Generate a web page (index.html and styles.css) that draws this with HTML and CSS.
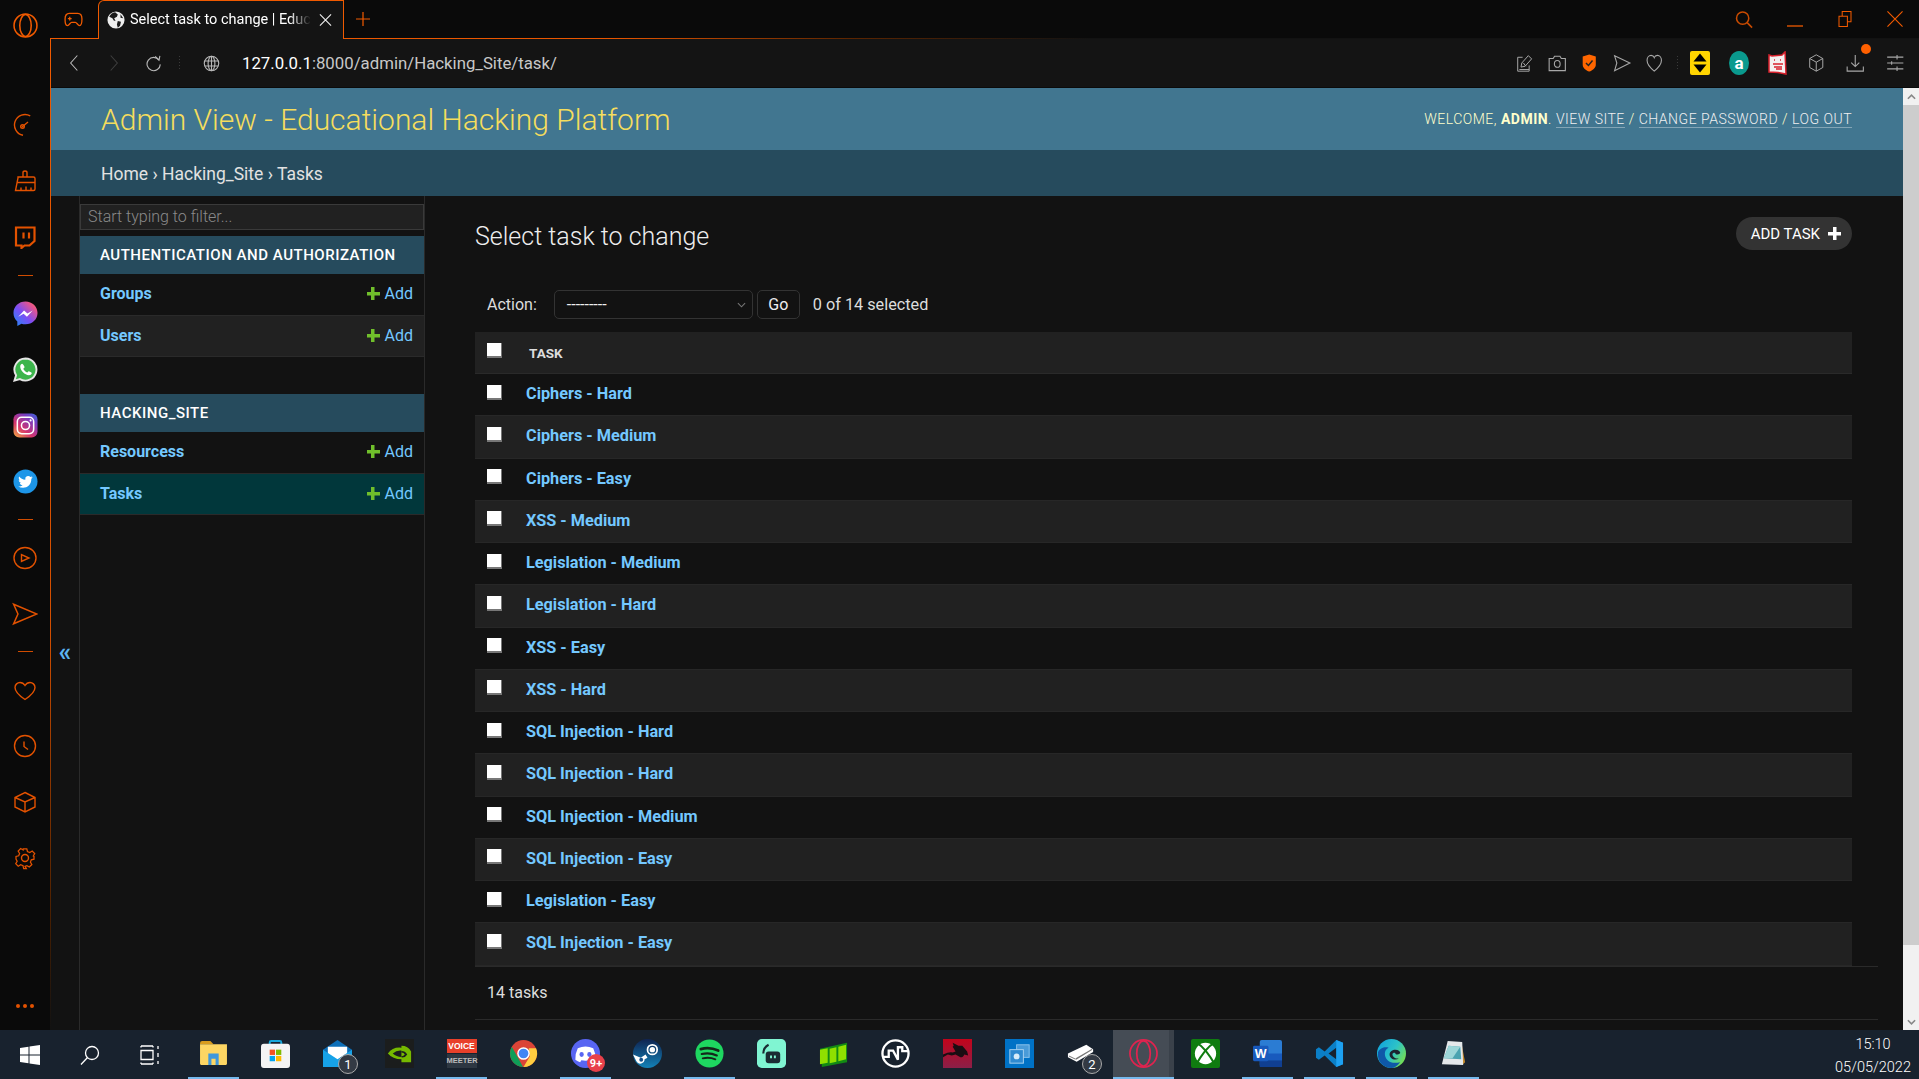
FILE: index.html
```html
<!DOCTYPE html>
<html lang="en">
    <head>
        <meta charset="UTF-8">
        <title>Select task to change | Educational Hacking Platform</title>
        <link rel="stylesheet" href="styles.css">
    </head>
    <body>
        <div class="upper">
            <aside class="rail">
                <svg class="rail-logo" viewBox="0 0 24 24"><circle cx="12" cy="12" r="11"/><ellipse cx="12" cy="12" rx="5.5" ry="10.5"/></svg>
                <ul class="rail-list">
                    <li><svg viewBox="0 0 24 24"><path d="M17.250 2.900A10.500 10.500 0 1 0 10 22.300"/><path d="M9 14l6-5"/><circle cx="9.500" cy="13.500" r="1.800"/><path d="M20 6.500v.01M21.700 9.500v.01M22.400 13v.01M21.700 16.500v.01"/></svg></li>
                    <li><svg viewBox="0 0 24 24"><path d="M10 8V3.500q0-1.500 2-1.500t2 1.500V8"/><path d="M5 8h15.500q1.500 0 1.500 1.500V20q0 1.500-1.500 1.500H2.500L5 9z"/><path d="M4 13.500h18M8 21.500v-3M13 21.500v-4M18 21.500v-3"/></svg></li>
                    <li><svg viewBox="0 0 24 24"><path class="thick" d="M3 2.500h18.500v13.500l-5 4.500h-5l-3 2.500v-2.500H3z"/><path class="thick" d="M10.500 7.500v6M16 7.500v6"/></svg></li>
                    <li class="rail-sep"></li>
                    <li><svg class="brand" viewBox="0 0 26 26"><defs><linearGradient id="msg" x1="0" y1="1" x2="1" y2="0"><stop offset="0" stop-color="#1e8cf5"/><stop offset=".45" stop-color="#7b4df5"/><stop offset=".8" stop-color="#e8558c"/><stop offset="1" stop-color="#f6806a"/></linearGradient></defs><path fill="url(#msg)" d="M13 .5C6 .5.500 5.500.500 12.500c0 3.600 1.500 6.700 4 8.800V26l4.300-2.400c1.300.4 2.700.6 4.200.6 7 0 12.500-5 12.500-11.700S20 .5 13 .5z"/><path fill="#fff" d="M5.500 16.500l6-6.500 3.500 3 5.500-3-6 6.500-3.500-3.200z"/></svg></li>
                    <li><svg class="brand" viewBox="0 0 26 26"><path fill="#3cb54c" stroke="#e6e6e6" stroke-width="2" d="M13 1.500a11.500 11.500 0 0 0-9.800 17.500L1.500 24.500l5.700-1.500A11.500 11.500 0 1 0 13 1.500z"/><path fill="#fff" d="M9.500 7c-.8 0-2 1-2 3 0 4 4.800 9 9 9 2 0 3-1.500 3-2.300 0-.7-2.500-2-3.200-2-.6 0-1 1.300-1.500 1.300-1.200 0-4-2.700-4-3.800 0-.6 1.200-1 1.200-1.600C12 9.800 10.500 7 9.500 7z"/></svg></li>
                    <li><svg class="brand" viewBox="0 0 26 26"><defs><linearGradient id="ig" x1="0" y1="1" x2=".8" y2="0"><stop offset="0" stop-color="#f5b342"/><stop offset=".4" stop-color="#d6336c"/><stop offset=".8" stop-color="#7a3cc0"/><stop offset="1" stop-color="#4f5bd5"/></linearGradient></defs><rect x=".5" y=".5" width="25" height="25" rx="6" fill="url(#ig)"/><rect x="4.500" y="4.500" width="17" height="17" rx="4.500" fill="none" stroke="#fff" stroke-width="1.600"/><circle cx="13" cy="13" r="4.200" fill="none" stroke="#fff" stroke-width="1.600"/><circle cx="18.300" cy="7.700" r="1.100" fill="#fff"/></svg></li>
                    <li><svg class="brand" viewBox="0 0 26 26"><circle cx="13" cy="13" r="12.500" fill="#1d96e8"/><path fill="#fff" d="M20.500 8.700c-.6.300-1.200.4-1.800.5.600-.4 1.100-1 1.400-1.700-.6.400-1.300.6-2 .8a3.100 3.100 0 0 0-5.300 2.800c-2.600-.1-4.900-1.400-6.400-3.300-.8 1.400-.4 3.200 1 4.100-.5 0-1-.1-1.400-.4 0 1.500 1.100 2.800 2.500 3.100-.5.100-.9.100-1.400.1.400 1.200 1.500 2.100 2.900 2.100-1.300 1-3 1.500-4.600 1.300 5.700 3.500 13.700.6 13.700-7.900.7-.5 1.100-1 1.400-1.500z"/></svg></li>
                    <li class="rail-sep"></li>
                    <li><svg viewBox="0 0 24 24"><ellipse cx="12" cy="12" rx="11" ry="10.500"/><path d="M8.500 8.500v7l7.500-3.500z"/></svg></li>
                    <li><svg class="wide" viewBox="0 0 24 24"><path d="M1.500 3L23 12 1.500 21 5.500 12z"/></svg></li>
                    <li class="rail-sep"></li>
                    <li><svg viewBox="0 0 24 24"><path d="M12 21.500C6 17.500 2 14 2 9.500 2 6.500 4.500 4.500 7 4.500c2.200 0 3.900 1.200 5 3 1.100-1.800 2.800-3 5-3 2.500 0 5 2 5 5 0 4.500-4 8-10 12z"/></svg></li>
                    <li><svg viewBox="0 0 24 24"><circle cx="12" cy="12" r="10.500"/><path d="M11 7.500v5l4 3"/></svg></li>
                    <li><svg viewBox="0 0 24 24"><path d="M12 2.500l10 5v9.500l-10 5-10-5V7.500zM2 7.500l10 4.500 10-4.500M12 12v9.500"/></svg></li>
                    <li><svg viewBox="0 0 24 24"><circle cx="12" cy="12" r="3.500"/><path d="M10 2h4l.7 3 2.600 1.100 2.700-1.600 2.800 2.800-1.600 2.700L22 10.500v3l-3 .7-1 2.600 1.600 2.700-2.800 2.800-2.700-1.600-2.100.8L13.500 24h-3l-.7-3.200-2.600-1.100-2.700 1.600-2.800-2.800 1.600-2.700L2 13.500v-3l3-.7 1-2.600-1.600-2.700 2.800-2.800 2.700 1.600L10 2z" transform="translate(1.200 1) scale(.9)"/></svg></li>
                </ul>
                <div class="rail-dots"><span></span><span></span><span></span></div>
            </aside>
            <div class="browser">
                <div class="tabstrip">
                    <svg class="strip-icon pad" viewBox="0 0 20 16"><path d="M5.500 1.500h9c2.500 0 4.500 2 4.500 6 0 4-.5 7-2.500 7s-3-3.500-4.500-3.500H8c-1.500 0-2.500 3.500-4.500 3.500S1 11.500 1 7.500c0-4 2-6 4.500-6z"/><path d="M6 5v4M4 7h4M13.500 6v.01M15.500 8v.01"/></svg>
                    <div class="tab">
                        <svg class="favicon" viewBox="0 0 20 20"><circle cx="10" cy="10" r="9.500" fill="#eee"/><path fill="#1a1a1a" d="M9 1.500C6 2 3.500 4 2.500 6.500L6 8l1.500 2.500 2 .5L8 8l3-1.500 1-2.500zM12 11l3.500 1-1 4.500-2.500 2-1-3.500zM15 3.500l3 4.500-3-.5z"/></svg>
                        <span class="tab-title">Select task to change | Educational Hacking Platform</span>
                        <svg class="tab-close" viewBox="0 0 14 14"><path d="M1 1l12 12M13 1L1 13"/></svg>
                    </div>
                    <svg class="strip-icon new-tab" viewBox="0 0 16 16"><path d="M8 0v16M0 8h16"/></svg>
                    <div class="win-controls">
                        <svg class="win-search" viewBox="0 0 20 20"><circle cx="8.500" cy="8.500" r="6.800"/><path d="M13.500 13.500l5.500 5.500"/></svg>
                        <svg class="win-min" viewBox="0 0 16 16"><path d="M0 15h16"/></svg>
                        <svg class="win-max" viewBox="0 0 16 20"><path d="M.5 6.500h10.500v13H.5zM4.500 6.500V.5H15.500v13H11"/></svg>
                        <svg class="win-close" viewBox="0 0 18 18"><path d="M.5.5l17 17M17.500.5l-17 17"/></svg>
                    </div>
                </div>
                <div class="window">
                    <div class="toolbar">
                        <svg class="tool nav" viewBox="0 0 12 20"><path d="M10 1L2 10l8 9"/></svg>
                        <svg class="tool nav dim" viewBox="0 0 12 20"><path d="M2 1l8 9-8 9"/></svg>
                        <svg class="tool reload" viewBox="0 0 20 20"><path d="M16.500 6A7.800 7.800 0 1 0 18 11"/><path d="M12 1.500l4.500 4.500 1-5"/></svg>
                        <span class="tool-dots"></span>
                        <svg class="tool globe" viewBox="0 0 20 20"><circle cx="10" cy="10" r="8.500"/><ellipse cx="10" cy="10" rx="4" ry="8.500"/><path d="M2 7h16M2 13h16M10 1.500v17"/></svg>
                        <div class="url"><b>127.0.0.1</b>:8000/admin/Hacking_Site/task/</div>
                        <div class="tool-right">
                            <svg class="ext" viewBox="0 0 20 22"><path d="M8 4H2v17h14v-7"/><path d="M6 16l1-5 8-9 4 4-8 9zM9 11l3 4M4 19h12"/></svg>
                            <svg class="ext" viewBox="0 0 20 20"><path d="M1 5h4.500L7 2.500h6L14.500 5H19v13.500H1z"/><ellipse cx="10" cy="11" rx="3.200" ry="3.800"/></svg>
                            <svg class="ext" viewBox="0 0 20 22"><path fill="#ff6600" stroke="none" d="M10 .5l6 2 2 .5v10c0 4-4 7-8 8.500-4-1.500-8-4.500-8-8.500V3l2-.5z"/><path stroke="#222" stroke-width="1.800" d="M6 11l3 3 5-6"/></svg>
                            <svg class="ext" viewBox="0 0 20 20"><path d="M1.500 2L18.500 10 1.500 18.500 4 10z"/></svg>
                            <svg class="ext" viewBox="0 0 20 20"><path d="M10 19C5 15 2 11 2 7c0-3 2-5.500 4.500-5.500C8 1.500 9.500 2.500 10 4c.5-1.500 2-2.500 3.500-2.500C16 1.500 18 4 18 7c0 4-3 8-8 12z"/></svg>
                            <span class="tool-dots small"></span>
                            <svg class="ext-app yellow" viewBox="0 0 20 24"><rect width="20" height="24" rx="2" fill="#ffd400"/><path d="M10 2.500l6.500 8h-13zM10 21.500l-6.500-8h13z" fill="#000"/></svg>
                            <svg class="ext-app" viewBox="0 0 20 24"><ellipse cx="10" cy="12" rx="10" ry="12" fill="#0a9a8e"/><text x="10" y="18" text-anchor="middle" class="ext-a">a</text></svg>
                            <svg class="ext-app last" viewBox="0 0 20 24"><path fill="#f4f0f0" stroke="#d8202c" stroke-width="1.500" d="M1 4l3 1 10-1 3-3 1 22-8-1.500L1 21z"/><path fill="none" stroke="#d8202c" stroke-width="1.600" d="M6 9h1M12 9h1M5 13h10M6 16h8M8 18h6"/></svg>
                            <svg class="ext" viewBox="0 0 20 22"><path d="M10 1l8 4.500v11L10 21l-8-4.500v-11zM2 5.500L10 10l8-4.500M10 10v11"/></svg>
                            <div class="ext-badge-box">
                                <svg class="ext" viewBox="0 0 20 20"><path d="M10 1v13M5.500 9.500L10 14l4.500-4.500M1 14v5h18v-5"/></svg>
                                <span class="ext-badge"></span>
                            </div>
                            <svg class="ext" viewBox="0 0 20 20"><path d="M1 3.500h18M1 10h18M1 16.500h18M12 1v5M6 8v4M12 14v5"/></svg>
                        </div>
                    </div>
                    <div class="viewport">
                        <div class="page">
                            <div class="site-header">
                                <h1 class="branding">Admin View - Educational Hacking Platform</h1>
                                <div class="user-tools">
                                    Welcome, <strong>admin</strong>.
                                    <a href="#">View site</a> /
                                    <a href="#">Change password</a> /
                                    <a href="#">Log out</a>
                                </div>
                            </div>
                            <div class="breadcrumbs"><a href="#">Home</a> › <a href="#">Hacking_Site</a> › Tasks</div>
                            <div class="main">
                                <div class="collapse-col"><button class="collapse">«</button></div>
                                <nav class="nav-sidebar">
                                    <input class="nav-filter" type="search" placeholder="Start typing to filter...">
                                    <div class="app-group">
                                        <div class="caption">Authentication and Authorization</div>
                                        <div class="model-row"><a href="#">Groups</a><a href="#" class="add-link">Add</a></div>
                                        <div class="model-row alt"><a href="#">Users</a><a href="#" class="add-link">Add</a></div>
                                    </div>
                                    <div class="app-group">
                                        <div class="caption">Hacking_Site</div>
                                        <div class="model-row"><a href="#">Resourcess</a><a href="#" class="add-link">Add</a></div>
                                        <div class="model-row current"><a href="#">Tasks</a><a href="#" class="add-link">Add</a></div>
                                    </div>
                                </nav>
                                <div class="content">
                                    <div class="content-head">
                                        <h2 class="page-title">Select task to change</h2>
                                        <a href="#" class="add-task">Add task <span class="add-plus"></span></a>
                                    </div>
                                    <div class="actions">
                                        <label>Action:</label>
                                        <div class="select">---------<svg viewBox="0 0 10 6"><path d="M1 1l4 4 4-4"/></svg></div>
                                        <button class="go">Go</button>
                                        <span class="counter">0 of 14 selected</span>
                                    </div>
                                    <div class="results">
                                        <div class="result-head"><span class="check"></span><span class="head-label">Task</span></div>
                                        <div class="result-row"><span class="check"></span><a href="#">Ciphers - Hard</a></div>
                                        <div class="result-row"><span class="check"></span><a href="#">Ciphers - Medium</a></div>
                                        <div class="result-row"><span class="check"></span><a href="#">Ciphers - Easy</a></div>
                                        <div class="result-row"><span class="check"></span><a href="#">XSS - Medium</a></div>
                                        <div class="result-row"><span class="check"></span><a href="#">Legislation - Medium</a></div>
                                        <div class="result-row"><span class="check"></span><a href="#">Legislation - Hard</a></div>
                                        <div class="result-row"><span class="check"></span><a href="#">XSS - Easy</a></div>
                                        <div class="result-row"><span class="check"></span><a href="#">XSS - Hard</a></div>
                                        <div class="result-row"><span class="check"></span><a href="#">SQL Injection - Hard</a></div>
                                        <div class="result-row"><span class="check"></span><a href="#">SQL Injection - Hard</a></div>
                                        <div class="result-row"><span class="check"></span><a href="#">SQL Injection - Medium</a></div>
                                        <div class="result-row"><span class="check"></span><a href="#">SQL Injection - Easy</a></div>
                                        <div class="result-row"><span class="check"></span><a href="#">Legislation - Easy</a></div>
                                        <div class="result-row"><span class="check"></span><a href="#">SQL Injection - Easy</a></div>
                                    </div>
                                    <div class="paginator">14 tasks</div>
                                </div>
                            </div>
                        </div>
                        <div class="scrollbar">
                            <div class="scroll-btn"><svg viewBox="0 0 10 6"><path d="M1 5l4-4 4 4"/></svg></div>
                            <div class="scroll-thumb"></div>
                            <div class="scroll-track"></div>
                            <div class="scroll-btn"><svg viewBox="0 0 10 6"><path d="M1 1l4 4 4-4"/></svg></div>
                        </div>
                    </div>
                </div>
            </div>
        </div>
        <footer class="taskbar">
            <div class="task-start">
                <div class="sys-btn"><svg class="win-logo" viewBox="0 0 20 20"><path d="M0 3l8.500-1.200V9.500H0zM9.500 1.600L20 0v9.500H9.500zM0 10.500h8.500v7.700L0 17zM9.500 10.500H20V20L9.500 18.400z"/></svg></div>
                <div class="sys-btn"><svg class="sys-line" viewBox="0 0 20 20"><circle cx="12" cy="8" r="6.500"/><path d="M7.500 12.500L1 19.500"/></svg></div>
                <div class="sys-btn"><svg class="sys-line" viewBox="0 0 20 20"><path d="M1 1h12M1 19h12M1 5.500h12v9H1zM18 1v3M18 8v4M18 16v3M1 1v1.500M13 1v1.500M1 17.500V19M13 17.500V19"/></svg></div>
            </div>
            <div class="task-apps">
                <div class="app open"><svg class="app-icon" viewBox="0 0 28 24"><path fill="#d89c1e" d="M1 2a2 2 0 0 1 2-2h8l3 3h-13z"/><path fill="#fdd663" d="M1 3h26v19a1 1 0 0 1-1 1H2a1 1 0 0 1-1-1z"/><path fill="#3f98dc" d="M9 12h10v11h-3v-6h-4v6H9z"/></svg></div>
                <div class="app"><svg class="app-icon" viewBox="0 0 30 30"><path fill="none" stroke="#18a8dc" stroke-width="2" d="M9 7V3.500q0-1.500 1.500-1.500h9Q21 2 21 3.500V7"/><rect y="5" width="30" height="25" rx="3" fill="#f4f4f4"/><rect x="9" y="11" width="5.500" height="5.500" fill="#f25022"/><rect x="15.500" y="11" width="5.500" height="5.500" fill="#7fba00"/><rect x="9" y="17.500" width="5.500" height="5.500" fill="#00a4ef"/><rect x="15.500" y="17.500" width="5.500" height="5.500" fill="#ffb900"/></svg></div>
                <div class="app"><svg class="app-icon" viewBox="0 0 30 30"><path fill="#0d6fb8" d="M0 11L15 1l15 10v18H0z"/><path fill="#fff" d="M5 8h20v11l-10 6-10-6z"/><path fill="#16a2e8" d="M0 11l15 10 15-10v18H0z"/></svg><span class="app-badge">1</span></div>
                <div class="app"><svg class="app-icon" viewBox="0 0 30 30"><rect width="30" height="30" fill="#1b1d1d"/><path fill="#76b900" d="M3 15q5-7 14-6V7q7 0 10 6v11H17v-3q-9 0-14-6zm14-3q-5-.5-9 3 4 3.500 9 3.500z"/><path fill="#1b1d1d" d="M17 19q4 .5 6-3-2-3.500-6-3.500V14q2.500 0 3.500 2-1.500 2-3.500 1.800z"/></svg></div>
                <div class="app open"><div class="voicemeeter"><span class="vm-top">VOICE</span><span class="vm-bottom">MEETER</span></div></div>
                <div class="app"><svg class="app-icon" viewBox="0 0 30 30"><circle cx="15" cy="15" r="14" fill="#db4437"/><path fill="#0f9d58" d="M15 29A14 14 0 0 1 2.900 8l6 10.500L14.500 29z"/><path fill="#ffcd40" d="M28 9.500A14 14 0 0 1 15 29l6.500-11-1-8.500z"/><circle cx="15" cy="15" r="6.500" fill="#fff"/><circle cx="15" cy="15" r="5" fill="#4285f4"/></svg></div>
                <div class="app open"><svg class="app-icon" viewBox="0 0 30 30"><circle cx="15" cy="15" r="15" fill="#5865f2"/><path fill="#fff" d="M7 9.500q8-3.500 16 0 3 6 2.500 12-2.500 2-5 2.500l-1.200-2q-4.300 1-8.600 0L9.500 24q-2.500-.5-5-2.500Q4 15.500 7 9.500z"/><ellipse cx="11" cy="16" rx="2.200" ry="2.500" fill="#5865f2"/><ellipse cx="19" cy="16" rx="2.200" ry="2.500" fill="#5865f2"/></svg><span class="app-badge red">9+</span></div>
                <div class="app"><svg class="app-icon" viewBox="0 0 30 30"><defs><linearGradient id="steam" x1="0" y1="0" x2="0" y2="1"><stop offset="0" stop-color="#0f2350"/><stop offset="1" stop-color="#1382b8"/></linearGradient></defs><circle cx="15" cy="15" r="15" fill="url(#steam)"/><circle cx="20" cy="11" r="5" fill="none" stroke="#fff" stroke-width="1.800"/><circle cx="20" cy="11" r="2.800" fill="#fff"/><path fill="#fff" d="M0 16l8 3.500 5-3.500 2 3.500-3 1.500a4.500 4.500 0 0 1-8.500 2z"/><circle cx="8.500" cy="21.500" r="2" fill="#17508a"/></svg></div>
                <div class="app open"><svg class="app-icon" viewBox="0 0 30 30"><circle cx="15" cy="15" r="14.500" fill="#1ed760"/><path fill="none" stroke="#14271a" stroke-width="2.800" stroke-linecap="round" d="M6 10.500q9-2.500 18 1.500"/><path fill="none" stroke="#14271a" stroke-width="2.300" stroke-linecap="round" d="M7 15.500q8-2 15.500 1.500"/><path fill="none" stroke="#14271a" stroke-width="2" stroke-linecap="round" d="M8 20q7-1.500 13 1"/></svg></div>
                <div class="app"><svg class="app-icon" viewBox="0 0 30 30"><rect width="30" height="30" rx="5" fill="#80f5d2"/><path fill="none" stroke="#1a2c33" stroke-width="2.200" d="M6.500 15q0-6 5.500-9"/><rect x="9" y="13" width="15" height="12" rx="3" fill="#1a2c33"/><path stroke="#80f5d2" stroke-width="2" d="M14.500 17v3M18.500 17v3"/></svg></div>
                <div class="app"><svg class="app-icon" viewBox="0 0 30 30"><path fill="#128a14" d="M1 10l28-6v20L3 29z"/><path fill="#8fe000" d="M1 11l8-1.500v15L1 26zM11 10l7-1.500v15L11 25zM20 8l8-2v15l-8 2z"/></svg></div>
                <div class="app"><svg class="app-icon" viewBox="0 0 30 30"><circle cx="15" cy="15" r="13.500" fill="none" stroke="#fff" stroke-width="2.400"/><path fill="none" stroke="#fff" stroke-width="2.400" d="M1.500 18.500H8V12h4.500l5 9.500V8.500H22v4h6.500"/></svg></div>
                <div class="app"><svg class="app-icon" viewBox="0 0 30 30"><defs><linearGradient id="msi" x1="0" y1="0" x2="0" y2="1"><stop offset="0" stop-color="#c2041b"/><stop offset="1" stop-color="#8c1f48"/></linearGradient></defs><rect width="30" height="30" fill="url(#msi)"/><path fill="#1a0d12" d="M0 16q7-3 10-2l3-1-3-5 1-1-1-3 6 3 4 0 5 6 1 4-4-1q-1 3-4 3l-5-3-4 1-4-1-5 3z"/></svg></div>
                <div class="app"><svg class="app-icon" viewBox="0 0 30 30"><rect width="30" height="30" fill="#0072c6"/><rect x="12" y="6" width="13" height="13" fill="#4a9bd8" stroke="#8cc3ec"/><rect x="5" y="11" width="14" height="14" fill="#2f8ad0" stroke="#a8d2f0"/><circle cx="12" cy="18" r="3" fill="#d8ecf9"/></svg></div>
                <div class="app"><svg class="app-icon tray" viewBox="0 0 30 30"><path fill="#fff" d="M1 15L20 6l7 4.500v3l-17 10L1 19z"/><path fill="#777" d="M9 20l17-10v1.500L9.500 21.500zM2 17l7 3.500v1L2 18z"/></svg><span class="app-badge">2</span></div>
                <div class="app open active"><svg class="app-icon" viewBox="0 0 30 30"><circle cx="15" cy="15" r="14" fill="none" stroke="#e0234f" stroke-width="1.800"/><ellipse cx="15" cy="15" rx="7" ry="13" fill="none" stroke="#e0234f" stroke-width="1.800"/></svg></div>
                <div class="app"><svg class="app-icon" viewBox="0 0 30 30"><rect width="30" height="30" rx="2" fill="#107c10"/><circle cx="15" cy="15" r="11" fill="#fff"/><path fill="none" stroke="#107c10" stroke-width="2.200" d="M6 4q9 5 19 23M24 4Q15 9 5 27"/></svg></div>
                <div class="app open"><svg class="app-icon" viewBox="0 0 30 30"><rect x="7" y="1" width="23" height="28" rx="2" fill="#2b7cd3"/><rect x="7" y="15" width="23" height="7" fill="#185abd"/><rect x="7" y="22" width="23" height="7" fill="#103f91"/><rect y="7" width="16" height="16" rx="1.500" fill="#185abd"/><text x="8" y="20" text-anchor="middle" class="word-w">W</text></svg></div>
                <div class="app open"><svg class="app-icon" viewBox="0 0 30 30"><path fill="#0b7fc7" d="M22 1L10 13 4 8.500 1 10.500V19.500l3 2 6-4.500L22 29l7-3V4zM22 9v12l-8-6z"/><path fill="#1da1f2" d="M22 1l7 3v22l-7 3z"/></svg></div>
                <div class="app open"><svg class="app-icon" viewBox="0 0 30 30"><defs><linearGradient id="edge" x1="0" y1="0" x2="1" y2=".6"><stop offset="0" stop-color="#0c9fe0"/><stop offset=".6" stop-color="#2dc3c8"/><stop offset="1" stop-color="#71dd58"/></linearGradient></defs><circle cx="15" cy="15" r="15" fill="url(#edge)"/><path fill="#0f58a8" d="M1 14C3 9 8 8 12 9c-5 2-5 9-1 13 3 3 8 3 13 2-3 4-6 6-9 6C6 30 0 23 1 14z"/><path fill="#1b2430" d="M13 16c0-3 3-5 6-5s5 2 5 3-1 2-3 2c-1 0-2 0-2-1s-3-1-3 1 3 5 7 4c-5 3-10 0-10-4z"/></svg></div>
                <div class="app open"><svg class="app-icon" viewBox="0 0 30 30"><path fill="#c48a2c" d="M23 3l4 21-3 3z"/><path fill="#e4e8ea" d="M9 2l15 1 1 24-22-1z"/><path fill="#4aa3b0" d="M10 7l12 1 1 13L5 20z"/><path fill="#9cd6d8" d="M10 7l12 1-8 12-9 0z"/></svg></div>
            </div>
            <div class="clock"><span>15:10</span><span>05/05/2022</span></div>
        </footer>
    </body>
</html>
```

FILE: styles.css
```css
*{
    margin: 0;
    padding: 0;
    box-sizing: border-box;
}
ul{
    list-style: none;
}
a{
    text-decoration: none;
    color: inherit;
}
html,body{
    width: 100%;
    height: 100%;
    overflow: hidden;
}
body{
    display: flex;
    flex-direction: column;
    background: #0a0a0a;
    font-family: Roboto, "Liberation Sans", sans-serif;
    color: #eee;
}
svg{
    display: block;
    flex: none;
    fill: none;
}

/* opera side rail */
.upper{
    flex: 1;
    display: flex;
    min-height: 0;
}
.rail{
    width: 50px;
    flex: none;
    display: flex;
    flex-direction: column;
    align-items: center;
    background: #0a0a0a;
    padding-top: 13px;
    padding-bottom: 22px;
}
.rail-logo{
    width: 25px;
    height: 25px;
    stroke: #f05a00;
    stroke-width: 1.500;
}
.rail-list{
    margin-top: 59px;
    width: 100%;
}
.rail-list li{
    height: 56.100px;
    display: flex;
    align-items: center;
    justify-content: center;
}
.rail-list li svg{
    width: 24px;
    height: 24px;
    stroke: #e35200;
    stroke-width: 1.400;
}
.rail-list li svg.brand{
    width: 25px;
    height: 25px;
    stroke: none;
}
.rail-list li svg .thick{
    stroke-width: 2.200;
}
.rail-list li svg.wide{
    width: 26px;
    height: 26px;
}
.rail-list li.rail-sep{
    height: 20px;
}
.rail-list li.rail-sep::before{
    content: "";
    width: 15px;
    height: 1px;
    background: #d04c00;
}
.rail-dots{
    margin-top: auto;
    display: flex;
    gap: 3px;
}
.rail-dots span{
    width: 4px;
    height: 4px;
    border-radius: 50%;
    background: #e35200;
}

/* tab strip */
.browser{
    flex: 1;
    min-width: 0;
    display: flex;
    flex-direction: column;
}
.tabstrip{
    height: 38px;
    flex: none;
    display: flex;
    align-items: center;
    background: #0a0a0a;
}
.strip-icon{
    stroke: #f05a00;
    stroke-width: 1.400;
}
.pad{
    width: 19px;
    height: 15px;
    margin-left: 14px;
}
.tab{
    position: relative;
    z-index: 1;
    align-self: flex-start;
    width: 246px;
    height: 39px;
    margin-left: 15px;
    display: flex;
    align-items: center;
    background: #141414;
    border: 1px solid #f05a00;
    border-bottom: 0;
    border-radius: 6px 0 0 0;
    padding: 0 11px 1px 8px;
}
.favicon{
    width: 18px;
    height: 18px;
}
.tab-title{
    flex: 1;
    min-width: 0;
    margin-left: 5px;
    font-size: 14.500px;
    color: #fff;
    white-space: nowrap;
    overflow: hidden;
    -webkit-mask-image: linear-gradient(to right, #000 88%, transparent 100%);
    mask-image: linear-gradient(to right, #000 88%, transparent 100%);
}
.tab-close{
    width: 13px;
    height: 14px;
    margin-left: 8px;
    stroke: #eee;
    stroke-width: 1.200;
}
.new-tab{
    width: 14px;
    height: 14px;
    margin-left: 12px;
}
.win-controls{
    margin-left: auto;
    display: flex;
    align-items: center;
    gap: 34px;
    padding-right: 16px;
}
.win-controls svg{
    stroke: #f05a00;
    stroke-width: 1.300;
}
.win-controls .win-search{
    width: 18px;
    height: 19px;
    stroke: #c94b00;
    stroke-width: 1.700;
}
.win-min{
    width: 16px;
    height: 16px;
}
.win-max{
    width: 16px;
    height: 16px;
}
.win-close{
    width: 16px;
    height: 16px;
}

/* toolbar */
.window{
    flex: 1;
    min-height: 0;
    display: flex;
    flex-direction: column;
    padding: 1px 0 0 1px;
    background:
        linear-gradient(to right, #f05a00 0, #e85600 560px, #5c2500 800px, #121212 1040px) top left/100% 1px no-repeat,
        linear-gradient(to bottom, #f05a00 0, #d24e00 60%, #4c2000 88%, #121212 100%) top left/1px 100% no-repeat,
        #121212;
}
.toolbar{
    height: 49px;
    flex: none;
    display: flex;
    align-items: center;
    background: #141414;
    border-bottom: 1px solid #0b0b0b;
    padding-left: 18px;
}
.tool{
    stroke: #b8b8b8;
    stroke-width: 1.300;
}
.nav{
    width: 10px;
    height: 18px;
}
.nav.dim{
    margin-left: 30px;
    stroke: #3e3e3e;
}
.reload{
    width: 17px;
    height: 17px;
    margin-left: 26px;
}
.tool-dots{
    width: 1px;
    height: 14px;
    margin-left: 17px;
    background-image: linear-gradient(#3a3a3a 50%, transparent 50%);
    background-size: 1px 3px;
}
.globe{
    width: 17px;
    height: 17px;
    margin-left: 23px;
}
.url{
    margin-left: 22px;
    font-size: 16.800px;
    color: #c8c8c8;
    white-space: nowrap;
}
.url b{
    font-weight: 400;
    color: #fff;
}
.tool-right{
    margin-left: auto;
    display: flex;
    align-items: center;
    padding-right: 8px;
}
.ext{
    width: 32.500px;
    height: 18px;
    stroke: #a8a8a8;
    stroke-width: 1.200;
}
.tool-dots.small{
    margin: 0 12px 0 6px;
}
.ext-app{
    width: 20px;
    height: 24px;
    margin-right: 19px;
}
.ext-app.last{
    margin-right: 12px;
}
.ext-a{
    font: 700 17px Roboto, sans-serif;
    fill: #fff;
}
.ext-badge-box{
    position: relative;
    margin-left: 7px;
    margin-right: 7px;
}
.ext-badge{
    position: absolute;
    top: -10px;
    right: 1px;
    width: 10px;
    height: 10px;
    border-radius: 50%;
    background: #ff6000;
}

/* django admin page */
.viewport{
    flex: 1;
    min-height: 0;
    display: flex;
}
.page{
    flex: 1;
    min-width: 0;
    display: flex;
    flex-direction: column;
    background: #121212;
}
.site-header{
    height: 62px;
    flex: none;
    display: flex;
    align-items: center;
    justify-content: space-between;
    padding: 0 51px 0 50px;
    background: #417690;
}
.branding{
    font-size: 30px;
    font-weight: 300;
    color: #f5dd5d;
}
.user-tools{
    font-size: 14px;
    font-weight: 300;
    text-transform: uppercase;
    letter-spacing: .5px;
    color: #ffc;
}
.user-tools strong{
    font-weight: 700;
}
.user-tools a{
    color: #f0f0f0;
    border-bottom: 1px solid rgba(255,255,255,.35);
}
.breadcrumbs{
    height: 46px;
    flex: none;
    display: flex;
    align-items: center;
    white-space: pre;
    padding: 2px 0 0 50px;
    font-size: 17.500px;
    color: #e2e2e2;
    background: #264b5d;
}
.main{
    flex: 1;
    min-height: 0;
    display: flex;
}
.collapse-col{
    width: 28px;
    flex: none;
    display: flex;
    align-items: center;
    justify-content: center;
    padding-top: 78px;
}
.collapse{
    border: 0;
    background: none;
    color: #5cb4f0;
    font: 700 25px Roboto, sans-serif;
    line-height: 1;
}
.nav-sidebar{
    width: 346px;
    flex: none;
    border-left: 1px solid #2a2a2a;
    border-right: 1px solid #2a2a2a;
    padding-top: 8px;
}
.nav-filter{
    display: block;
    width: 100%;
    height: 26px;
    border: 1px solid #3a3a3a;
    background: #212121;
    padding: 0 0 1px 7px;
    margin-bottom: 6px;
    font: 300 16px Roboto, sans-serif;
    color: #eee;
    outline: 0;
}
.nav-filter::placeholder{
    color: #8a8a8a;
}
.app-group{
    margin-bottom: 37px;
}
.caption{
    height: 38px;
    display: flex;
    align-items: center;
    padding-left: 20px;
    background: #264b5d;
    font-size: 15px;
    font-weight: 500;
    letter-spacing: .53px;
    text-transform: uppercase;
    color: #fff;
}
.model-row{
    height: 41.500px;
    display: flex;
    align-items: center;
    justify-content: space-between;
    padding: 0 11px 1px 20px;
    border-bottom: 1px solid #2a2a2a;
    font-size: 16px;
    font-weight: 700;
    color: #74c8ff;
}
.model-row.alt{
    background: #212121;
}
.model-row.current{
    background: #01373b;
}
.add-link{
    display: flex;
    align-items: center;
    font-weight: 400;
}
.add-link::before{
    content: "";
    width: 13px;
    height: 13px;
    margin-right: 5px;
    background:
        linear-gradient(#70bf2b, #70bf2b) center/3.500px 100% no-repeat,
        linear-gradient(#70bf2b, #70bf2b) center/100% 3.500px no-repeat;
}
.content{
    flex: 1;
    min-width: 0;
    padding: 21px 25px 0 50px;
}
.content-head{
    display: flex;
    justify-content: space-between;
    height: 33px;
    margin-right: 26px;
}
.page-title{
    padding-top: 3px;
    font-size: 25px;
    font-weight: 300;
    line-height: 33px;
    color: #eee;
}
.add-task{
    height: 33px;
    display: flex;
    align-items: center;
    padding: 0 11px 0 15px;
    border-radius: 17px;
    background: #333;
    font-size: 15px;
    font-weight: 400;
    text-transform: uppercase;
    color: #fff;
}
.add-plus{
    width: 13px;
    height: 13px;
    margin-left: 8px;
    background:
        linear-gradient(#fff, #fff) center/3.500px 100% no-repeat,
        linear-gradient(#fff, #fff) center/100% 3.500px no-repeat;
}
.actions{
    margin-top: 40px;
    height: 29px;
    margin-right: 26px;
    display: flex;
    align-items: center;
    padding-left: 12px;
    font-size: 16px;
    color: #ddd;
}
.select{
    width: 199px;
    height: 29px;
    margin-left: 17px;
    display: flex;
    align-items: center;
    justify-content: space-between;
    padding: 0 6px 0 12px;
    border: 1px solid #333;
    border-radius: 5px;
    font-size: 16px;
    color: #eee;
}
.select svg{
    width: 9px;
    height: 6px;
    stroke: #777;
    stroke-width: 1.200;
}
.go{
    width: 43px;
    height: 29px;
    margin-left: 4px;
    border: 1px solid #333;
    border-radius: 5px;
    background: #121212;
    font: 400 16px Roboto, sans-serif;
    color: #eee;
}
.counter{
    margin-left: 13px;
    font-size: 16.250px;
}
.results{
    margin-top: 13px;
    margin-right: 26px;
}
.result-head{
    height: 42px;
    display: flex;
    align-items: center;
    padding-left: 12px;
    background: #212121;
    border-bottom: 1px solid #2a2a2a;
}
.head-label{
    margin-left: 27px;
    font-size: 13.500px;
    font-weight: 700;
    text-transform: uppercase;
    color: #ddd;
}
.check{
    width: 15px;
    height: 15px;
    flex: none;
    background: #fff;
    border: 1px solid #777;
    border-width: 0 1px 2px 0;
}
.result-head .check{
    margin-top: -4px;
}
.result-row{
    height: 42.250px;
    display: flex;
    align-items: center;
    padding: 0 0 2px 12px;
    border-bottom: 1px solid #272727;
    font-size: 16.250px;
    font-weight: 700;
    color: #74c8ff;
}
.result-row .check{
    margin-top: -3px;
}
.result-row a{
    margin-left: 24px;
}
.result-row:nth-child(odd){
    background: #212121;
}
.paginator{
    height: 54px;
    display: flex;
    align-items: center;
    padding-left: 12px;
    border-top: 1px solid #2a2a2a;
    border-bottom: 1px solid #2a2a2a;
    font-size: 16px;
    color: #ddd;
}

/* page scrollbar */
.scrollbar{
    width: 16px;
    flex: none;
    display: flex;
    flex-direction: column;
    background: #f1f1f1;
}
.scroll-btn{
    height: 17px;
    flex: none;
    display: flex;
    align-items: center;
    justify-content: center;
}
.scroll-btn svg{
    width: 9px;
    height: 6px;
    stroke: #888;
    stroke-width: 1.800;
}
.scroll-thumb{
    height: 840px;
    flex: none;
    background: #cdcdcd;
}
.scroll-track{
    flex: 1;
}

/* windows taskbar */
.taskbar{
    height: 49px;
    flex: none;
    display: flex;
    align-items: stretch;
    background: #18222e;
}
.task-start{
    display: flex;
    width: 188px;
    flex: none;
}
.sys-btn{
    width: 60px;
    display: flex;
    align-items: center;
    justify-content: center;
}
.win-logo{
    width: 20px;
    height: 20px;
    fill: #fff;
}
.sys-line{
    width: 20px;
    height: 20px;
    stroke: #fff;
    stroke-width: 1.300;
}
.task-apps{
    display: flex;
    flex: 1;
}
.app{
    position: relative;
    width: 51px;
    margin-right: 11px;
    display: flex;
    align-items: center;
    justify-content: center;
    border-bottom: 2px solid transparent;
}
.app.open{
    border-bottom-color: #76b9ed;
}
.app.active{
    width: 61px;
    margin-left: -5px;
    margin-right: 6px;
    background: #454c55;
    box-shadow: inset -5px 0 #3a414a;
}
.app-icon{
    width: 29px;
    height: 29px;
}
.app-badge{
    position: absolute;
    right: 5px;
    bottom: 3px;
    width: 20px;
    height: 20px;
    display: flex;
    align-items: center;
    justify-content: center;
    border-radius: 50%;
    background: #333a44;
    border: 1px solid #aaa;
    font-size: 13px;
    color: #fff;
}
.app-badge.red{
    width: 18px;
    height: 18px;
    bottom: 5px;
    right: 6px;
    background: #e8404a;
    border: 0;
    font-size: 11px;
    font-weight: 700;
}
.voicemeeter{
    width: 30px;
    height: 29px;
    display: flex;
    flex-direction: column;
    justify-content: space-between;
    text-align: center;
    font: 700 8.500px "Liberation Sans", sans-serif;
    line-height: 14px;
}
.vm-top{
    background: #e8402a;
    color: #fff;
}
.vm-bottom{
    background: #2d3742;
    color: #bbb;
    font-size: 7.500px;
}
.word-w{
    font: 700 13px "Liberation Sans", sans-serif;
    fill: #fff;
}
.clock{
    margin-left: auto;
    width: 92px;
    display: flex;
    flex-direction: column;
    align-items: center;
    justify-content: center;
    gap: 6px;
    padding-top: 2px;
    font-size: 14.500px;
    font-weight: 300;
    line-height: 17px;
    color: #fff;
}
```
